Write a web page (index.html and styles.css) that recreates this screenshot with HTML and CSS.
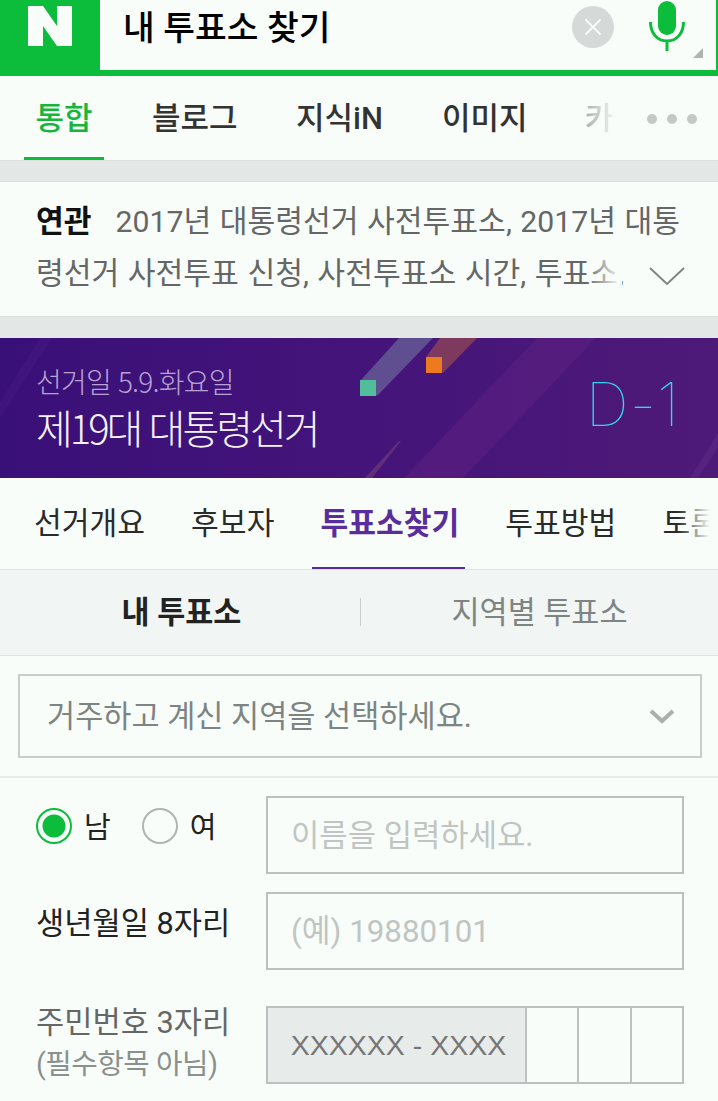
FILE: index.html
```html
<!DOCTYPE html>
<html lang="ko">
<head>
<meta charset="utf-8">
<title>내 투표소 찾기</title>
<link rel="stylesheet" href="styles.css">
</head>
<body>
<header class="search">
  <div class="logo"><svg width="44" height="40" viewBox="0 0 44 40"><polygon points="0,0 15,0 29,20 29,0 44,0 44,40 29,40 15,20 15,40 0,40" fill="#f8fdf9"/></svg></div>
  <div class="query">
    <span class="query-text">내 투표소 찾기</span>
    <span class="clear"><svg width="20" height="20" viewBox="0 0 20 20"><path d="M2.500 2.500L17.500 17.500M17.500 2.500L2.500 17.500" stroke="#f8fdf8" stroke-width="1.800" fill="none"/></svg></span>
    <svg class="mic" width="38" height="52" viewBox="0 0 38 52"><rect x="10" y="1" width="18" height="34" rx="9" fill="#0cbd3c"/><path d="M2.500 22C2.500 33 9 41 19 41S35.500 33 35.500 22M19 41V51" stroke="#0cbd3c" stroke-width="3" fill="none"/></svg>
    <span class="corner"></span>
  </div>
</header>
<nav class="tabs">
  <a class="tab tab-on">통합</a>
  <a class="tab">블로그</a>
  <a class="tab">지식iN</a>
  <a class="tab">이미지</a>
  <a class="tab tab-fade">카</a>
  <span class="dots"><i></i><i></i><i></i></span>
</nav>
<div class="gap gap-first"></div>
<section class="related">
  <p class="related-text"><b>연관</b><span class="related-links">2017년 대통령선거 사전투표소, 2017년 대통령선거 사전투표 신청, 사전투표소 시간, 투표소,</span></p>
  <span class="fade"></span>
  <svg class="chev" width="36" height="20" viewBox="0 0 36 20"><path d="M1 2L18 18L35 2" stroke="#7b8280" stroke-width="1.800" fill="none"/></svg>
</section>
<div class="gap gap-second"></div>
<section class="banner">
  <svg class="banner-art" width="718" height="140" viewBox="0 0 718 140">
    <polygon points="0,64 40,0 52,0 0,80" fill="#4a2088" opacity=".35"/>
    <polygon points="537,0 596,0 463,140 404,140" fill="#5a1f80" opacity=".6"/>
    <polygon points="399,0 433,0 377,58 361,42" fill="#5f4f90"/>
    <polygon points="440,0 477,0 443,35 426,19" fill="#7d3a5e"/>
    <polygon points="365,140 399,103 401,103 372,140" fill="#6d3a78" opacity=".7"/>
    <polygon points="718,110 718,95 690,140 698,140" fill="#5f2a88" opacity=".5"/>
    <rect x="360" y="42" width="16" height="16" fill="#52bd9a"/>
    <rect x="426" y="19" width="16" height="16" fill="#ed7a1c"/>
  </svg>
  <div class="banner-copy">
    <p class="banner-date">선거일 5.9.화요일</p>
    <h1 class="banner-title">제19대 대통령선거</h1>
  </div>
  <div class="dday">D-1</div>
</section>
<nav class="menu">
  <a class="menu-item">선거개요</a>
  <a class="menu-item">후보자</a>
  <a class="menu-item menu-on">투표소찾기</a>
  <a class="menu-item">투표방법</a>
  <a class="menu-item">토론</a>
  <span class="menu-fade"></span>
</nav>
<div class="subtabs">
  <a class="subtab subtab-on">내 투표소</a>
  <span class="subdiv"></span>
  <a class="subtab">지역별 투표소</a>
</div>
<section class="region">
  <div class="select"><span>거주하고 계신 지역을 선택하세요.</span>
    <svg width="28" height="16" viewBox="0 0 28 16"><path d="M3 3L14 13L25 3" stroke="#a9b0ae" stroke-width="4" fill="none"/></svg>
  </div>
</section>
<form class="form">
  <div class="row">
    <div class="label radios">
      <span class="radio radio-on"></span><span class="radio-label">남</span>
      <span class="radio"></span><span class="radio-label">여</span>
    </div>
    <div class="field">이름을 입력하세요.</div>
  </div>
  <div class="row">
    <div class="label">생년월일 8자리</div>
    <div class="field field-num">(예) 19880101</div>
  </div>
  <div class="row row-last">
    <div class="label label-muted">주민번호 3자리<small>(필수항목 아님)</small></div>
    <div class="field field-id">
      <span class="id-mask">XXXXXX - XXXX</span><span class="id-cell"></span><span class="id-cell"></span><span class="id-cell"></span>
    </div>
  </div>
</form>
</body>
</html>
```
FILE: styles.css
```css
* { box-sizing: border-box; }
html, body { margin: 0; padding: 0; }
body {
  width: 718px;
  height: 1101px;
  overflow: hidden;
  background: #f8fdf9;
  font-family: Roboto, "Noto Sans CJK KR", "Noto Sans", sans-serif;
  color: #222;
}
p, h1 { margin: 0; }

.search { display: flex; height: 76px; background: #0cbd3c; padding: 0 2px 6px 0; }
.logo { width: 100px; height: 70px; padding: 6px 0 0 28px; }
.logo svg { display: block; }
.query { flex: 1; position: relative; background: #f8fdf9; display: flex; align-items: center; padding-left: 23px; }
.query-text { flex: 1; font-size: 34.500px; font-weight: 500; color: #000; line-height: 44px; margin-top: -14px; }
.clear { position: absolute; left: 472px; top: 6px; width: 42px; height: 42px; border-radius: 50%; background: #d5dad8; display: flex; align-items: center; justify-content: center; }
.mic { position: absolute; left: 548px; top: 0; }
.corner { position: absolute; right: 13px; top: 48px; width: 0; height: 0; border-left: 10px solid transparent; border-bottom: 10px solid #aeb4b2; }

.tabs { display: flex; height: 84px; position: relative; }
.tab { position: absolute; top: 0; font-size: 31px; font-weight: 500; color: #333; text-align: center; line-height: 86px; height: 84px; white-space: nowrap; }
.tab:nth-child(1) { left: 24px; width: 80px; }
.tab:nth-child(2) { left: 152px; width: 84px; }
.tab:nth-child(3) { left: 296px; width: 85px; }
.tab:nth-child(4) { left: 442px; width: 83px; }
.tab:nth-child(5) { left: 584px; width: 30px; }
.tab-on { color: #17b53c; }
.tab-on::after { content: ""; position: absolute; left: 0; right: 0; bottom: 0; height: 3px; background: #0cbd3c; }
.tab-fade { color: transparent; background: linear-gradient(to right, #a8adab, #f0f4f2); -webkit-background-clip: text; background-clip: text; }
.dots { position: absolute; left: 647px; top: 38px; display: flex; gap: 10px; }
.dots i { width: 10px; height: 10px; border-radius: 50%; background: #c4c9c7; }

.gap { background: #e3e8e6; border-top: 1px solid #dbe0de; border-bottom: 1px solid #dbe0de; }
.gap-first { height: 22px; }
.gap-second { height: 22px; border-bottom: 0; }

.related { position: relative; height: 134px; padding: 14px 36px 0; }
.related-text { font-size: 30.200px; word-spacing: 1px; line-height: 52px; color: #666; width: 646px; height: 104px; overflow: hidden; word-break: break-all; }
.related-text b { font-weight: 700; color: #111; margin-right: 24px; }
.fade { position: absolute; left: 586px; top: 66px; width: 36px; height: 46px; background: linear-gradient(to right, rgba(248,253,249,0), #f8fdf9); }
.chev { position: absolute; left: 649px; top: 84px; }

.banner { position: relative; height: 140px; background: linear-gradient(90deg, #391078 0%, #44147a 50%, #4e1a78 100%); overflow: hidden; display: flex; align-items: flex-start; justify-content: space-between; padding: 24px 38px 0 36px; }
.banner-art { position: absolute; left: 0; top: 0; }
.banner-copy { position: relative; }
.banner-date { font-family: "Noto Sans CJK KR", sans-serif; font-size: 28px; line-height: 38px; color: #b6a3d4; letter-spacing: -.8px; font-weight: 300; }
.banner-title { font-family: "Noto Sans CJK KR", sans-serif; font-size: 40px; line-height: 54px; font-weight: 300; color: #f6f2fa; letter-spacing: -3px; }
.dday { position: relative; font: 100 60px/60px "Inter", sans-serif; color: #34d3ea; margin-top: 12px; letter-spacing: 1px; }

.menu { position: relative; display: flex; height: 92px; border-bottom: 1px solid #dfe4e2; overflow: hidden; padding-left: 34px; }
.menu-item { position: relative; flex: none; font-size: 30.200px; font-weight: 400; color: #2a2a2a; line-height: 92px; margin-right: 46px; white-space: nowrap; }
.menu-on { color: #5a2d9c; font-weight: 700; }
.menu-on::after { content: ""; position: absolute; left: -8px; right: -6px; bottom: 0; height: 2px; background: #5a2d9c; }
.menu-fade { position: absolute; right: 0; top: 0; width: 40px; height: 90px; background: linear-gradient(to right, rgba(248,253,249,0), #f8fdf9 80%); }

.subtabs { height: 86px; display: flex; align-items: center; background: #f1f5f3; border-bottom: 1px solid #dfe4e2; padding: 0 0 6px 3px; }
.subtab { flex: 1; text-align: center; font-size: 30.500px; color: #7d8482; }
.subtab-on { font-weight: 700; color: #222; }
.subdiv { width: 1px; height: 28px; margin-top: 4px; background: #c9cecc; }

.region { height: 122px; padding: 18px 16px 0 18px; border-bottom: 2px solid #e8edeb; }
.select { height: 84px; border: 2px solid #c9cecc; display: flex; align-items: center; justify-content: space-between; padding: 0 24px 4px 27px; font-size: 30.600px; color: #7d8482; }
.select svg { margin-top: 4px; }

.form { padding: 18px 34px 0 36px; }
.row { display: flex; height: 80px; margin-bottom: 16px; }
.row-last { margin-top: 34px; }
.label { width: 230px; font-size: 30.700px; line-height: 64px; color: #222; white-space: nowrap; }
.label-muted { color: #666; line-height: 34px; }
.label small { display: block; font-size: 28.800px; color: #8a908e; line-height: 48px; letter-spacing: -.5px; }
.radios { display: flex; align-items: center; height: 60px; font-size: 28px; }
.radio { width: 36px; height: 36px; border: 2px solid #b0b5b3; border-radius: 50%; }
.radio-on { border-color: #0cbd3c; background: radial-gradient(circle, #0cbd3c 0 11px, transparent 12px); }
.radio-label { margin: 4px 31px 0 12px; font-size: 29px; }
.field { flex: 1; height: 78px; border: 2px solid #bcc1bf; display: flex; align-items: center; padding: 0 0 6px 23px; font-size: 30.800px; color: #c0c5c3; }
.field-num { font-size: 31.300px; padding-bottom: 5px; }
.field-id { padding: 0; }
.id-mask { width: 259px; height: 100%; background: #e7ebe9; border-right: 2px solid #bcc1bf; display: flex; align-items: center; justify-content: center; padding-left: 4px; color: #777; font: 400 28.500px "Liberation Sans", sans-serif; }
.id-cell { flex: 1; height: 100%; border-right: 2px solid #bcc1bf; }
.id-cell:last-child { border-right: 0; }
```
